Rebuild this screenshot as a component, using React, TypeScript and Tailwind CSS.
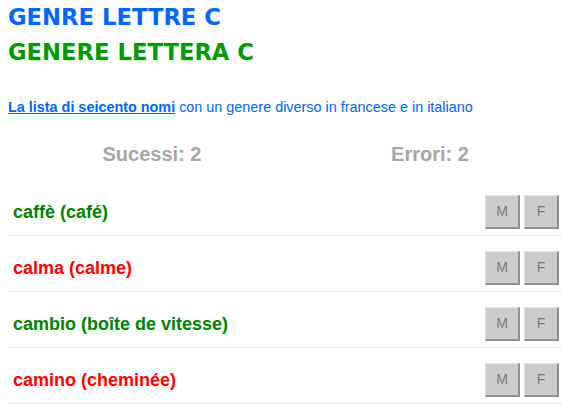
import React from "react";

const rows = [
  { text: "caffè (café)", ok: true },
  { text: "calma (calme)", ok: false },
  { text: "cambio (boîte de vitesse)", ok: true },
  { text: "camino (cheminée)", ok: false },
];

function Btn({ label }: { label: string }) {
  return (
    <button className="w-[35px] h-[34px] bg-[#cccccc] border-t border-l border-t-[#e2e2e2] border-l-[#e2e2e2] border-r-2 border-b-2 border-r-[#8f8f8f] border-b-[#8f8f8f] text-[#7a7a7a] text-[14px] flex items-center justify-center [font-family:'Liberation_Sans',Arial,sans-serif]">
      {label}
    </button>
  );
}

export default function App() {
  return (
    <div className="w-[562px] h-[407px] overflow-hidden bg-white pl-[8px] [font-family:'Liberation_Sans',Arial,sans-serif]">
      <div className="h-[35px] leading-[35px] text-[22.7px] font-bold text-[#0066ff] [font-family:'DejaVu_Sans',sans-serif]">
        GENRE LETTRE C
      </div>
      <div className="h-[35px] leading-[35px] text-[22.7px] font-bold text-[#009900] [font-family:'DejaVu_Sans',sans-serif]">
        GENERE LETTERA C
      </div>
      <p className="mt-[27px] h-[20px] leading-[20px] text-[14.4px] text-[#0066ff] whitespace-nowrap">
        <a href="#" className="font-bold underline">La lista di seicento nomi</a> con un genere diverso in francese e in italiano
      </p>
      <div className="mt-[23px] h-[28px] leading-[28px] flex pl-[5px] text-[20px] font-bold text-[#a6a6a6]">
        <div className="w-[278px] shrink-0 text-center">Sucessi: 2</div>
        <div className="w-[278px] shrink-0 text-center">Errori: 2</div>
      </div>
      <div className="mt-[12px]">
        {rows.map((r) => (
          <div
            key={r.text}
            className="flex items-center justify-between pt-[15px] pb-[6px] pl-[5px] pr-[3px] border-b border-[#e8e8e8]"
          >
            <span className={`text-[18px] font-bold ${r.ok ? "text-[#008000]" : "text-[#ff0000]"}`}>
              {r.text}
            </span>
            <div className="flex gap-[4px]">
              <Btn label="M" />
              <Btn label="F" />
            </div>
          </div>
        ))}
      </div>
    </div>
  );
}
